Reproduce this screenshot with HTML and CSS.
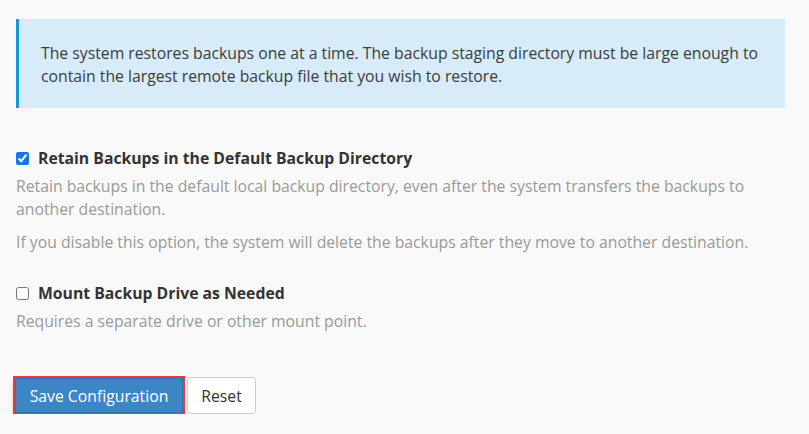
FILE: index.html
```html
<!DOCTYPE html>
<html lang="en">
<head>
    <meta charset="UTF-8">
    <meta name="viewport" content="width=device-width, initial-scale=1.0">
    <title>Backup Configuration</title>
    <link rel="stylesheet" href="styles.css">
</head>
<body>
    <div class="container">
        <div class="callout">
            The system restores backups one at a time. The backup staging directory must be large enough to
            contain the largest remote backup file that you wish to restore.
        </div>

        <div class="option">
            <label class="option-label" for="retainBackups">
                <input type="checkbox" id="retainBackups" checked>
                Retain Backups in the Default Backup Directory
            </label>
            <p class="help">Retain backups in the default local backup directory, even after the system transfers the backups to another destination.</p>
            <p class="help">If you disable this option, the system will delete the backups after they move to another destination.</p>
        </div>

        <div class="option">
            <label class="option-label" for="mountDrive">
                <input type="checkbox" id="mountDrive">
                Mount Backup Drive as Needed
            </label>
            <p class="help">Requires a separate drive or other mount point.</p>
        </div>

        <div class="actions">
            <button class="btn btn-primary">Save Configuration</button>
            <button class="btn btn-default">Reset</button>
        </div>
    </div>
</body>
</html>
```

FILE: styles.css
```css
body {
    font-family: "Open Sans", Arial, sans-serif;
    font-size: 15.75px;
    line-height: 23px;
    margin: 0;
    background-color: #f9f9f9;
    color: #333;
}

.container {
    padding: 19px 24px 0 16px;
}

.callout {
    background-color: #d7ebf8;
    border-left: 3px solid #179bd7;
    padding: 23px 22px 21px 22px;
    line-height: 22.5px;
    color: #3b3b3b;
}

.option {
    margin-top: 39px;
}

.option + .option {
    margin-top: 28px;
}

.option-label {
    display: flex;
    align-items: center;
    font-weight: bold;
    color: #333;
}

.option-label input {
    width: 13px;
    height: 13px;
    margin: 0 9px 0 0;
    accent-color: #1a73e8;
}

.help {
    margin: 5px 0 0;
    color: #9a9a9a;
}

.help + .help {
    margin-top: 10px;
}

.actions {
    display: flex;
    gap: 4px;
    margin-top: 44px;
}

.btn {
    font-family: inherit;
    font-size: 15.75px;
    padding: 0;
    height: 37px;
    border-radius: 4px;
    white-space: nowrap;
    cursor: pointer;
}

.btn-primary {
    background-color: #3d86c6;
    color: #fff;
    border: 1px solid #3573aa;
    border-radius: 0;
    outline: 2px solid #e8393f;
    margin-left: -1px;
    width: 168px;
    height: 35px;
    margin-top: 1px;
    box-shadow: 0 4px 6px rgba(0, 0, 0, 0.35);
}

.btn-default {
    background-color: #fff;
    color: #333;
    border: 1px solid #ccc;
    width: 69px;
}
```
